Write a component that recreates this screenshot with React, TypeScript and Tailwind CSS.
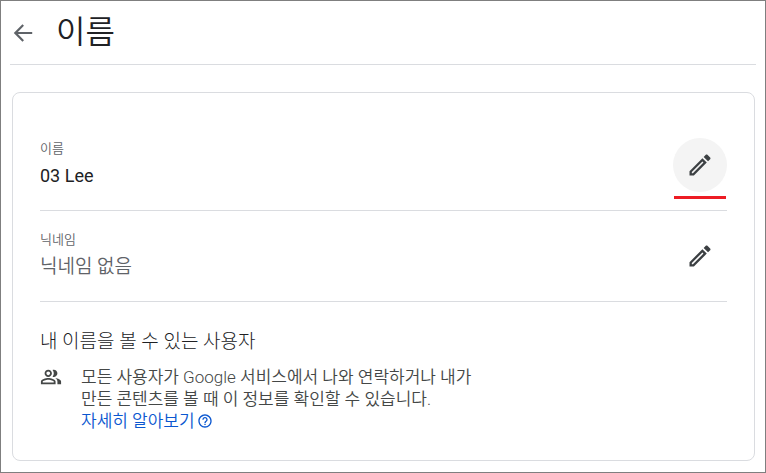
import React from "react";

function PencilIcon() {
  return (
    <svg viewBox="0 0 24 24" className="size-7 fill-[#3c4043]" aria-hidden="true">
      <path d="M14.06 9.02l.92.92L5.92 19H5v-.92l9.06-9.06M17.66 3c-.25 0-.51.1-.7.29l-1.83 1.83 3.75 3.75 1.83-1.83c.39-.39.39-1.02 0-1.41l-2.34-2.34c-.2-.2-.45-.29-.71-.29zm-3.6 3.19L3 17.25V21h3.75L17.81 9.94l-3.75-3.75z" />
    </svg>
  );
}

function BackIcon() {
  return (
    <svg viewBox="0 0 24 24" className="size-[26px] fill-[#5f6368]" aria-hidden="true">
      <path d="M20.5 11H7.3l5.59-5.59L11.5 4l-8 8 8 8 1.41-1.41L7.3 13h13.2v-2z" />
    </svg>
  );
}

function PeopleIcon() {
  return (
    <svg viewBox="0 0 24 24" className="size-[22px] shrink-0 fill-[#444746]" aria-hidden="true">
      <path d="M16.67 13.13C18.04 14.06 19 15.32 19 17v3h4v-3c0-2.18-3.57-3.47-6.33-3.87z" />
      <path d="M15 12c2.21 0 4-1.79 4-4s-1.79-4-4-4c-.47 0-.91.1-1.33.24C14.5 5.27 15 6.58 15 8s-.5 2.73-1.33 3.76c.42.14.86.24 1.33.24z" />
      <path d="M9 12c2.21 0 4-1.79 4-4s-1.79-4-4-4-4 1.79-4 4 1.79 4 4 4zm0-6c1.1 0 2 .9 2 2s-.9 2-2 2-2-.9-2-2 .9-2 2-2zm0 7c-2.67 0-8 1.34-8 4v3h16v-3c0-2.66-5.33-4-8-4zm6 5H3v-.99C3.2 16.29 6.3 15 9 15s5.8 1.29 6 2v1z" />
    </svg>
  );
}

function HelpIcon() {
  return (
    <svg viewBox="0 0 24 24" className="size-4 fill-[#0b57d0]" aria-hidden="true">
      <path d="M11 18h2v-2h-2v2zm1-16C6.48 2 2 6.48 2 12s4.48 10 10 10 10-4.48 10-10S17.52 2 12 2zm0 18c-4.41 0-8-3.59-8-8s3.59-8 8-8 8 3.59 8 8-3.59 8-8 8zm0-14c-2.21 0-4 1.79-4 4h2c0-1.1.9-2 2-2s2 .9 2 2c0 2-3 1.75-3 5h2c0-2.25 3-2.5 3-5 0-2.21-1.79-4-4-4z" />
    </svg>
  );
}

type FieldProps = {
  label: string;
  value: string;
  muted?: boolean;
  active?: boolean;
};

function Field({ label, value, muted, active }: FieldProps) {
  return (
    <div className="flex h-[91px] items-center justify-between border-b border-[#dadce0]">
      <dl className="pt-0.5">
        <dt className="text-[13px] leading-5 font-[350] text-[#5f6368]">{label}</dt>
        <dd
          className={
            muted
              ? "text-[19px] leading-[34px] font-[350] text-[#5f6368]"
              : "text-lg leading-[34px] text-[#202124]"
          }
        >
          {value}
        </dd>
      </dl>
      <div className="relative">
        <button
          type="button"
          aria-label={label + " 수정"}
          className={
            active
              ? "flex size-[54px] items-center justify-center rounded-full bg-[#f4f4f4]"
              : "flex size-[54px] items-center justify-center rounded-full"
          }
        >
          <PencilIcon />
        </button>
        {active && <span className="absolute inset-x-px top-full mt-1 h-[3px] bg-[#ed1c24]" />}
      </div>
    </div>
  );
}

export default function App() {
  return (
    <div className="min-h-screen border border-[#7f7f7f] bg-white px-[9px] pb-2 font-['Roboto','Noto_Sans_CJK_KR',sans-serif] font-normal">
      <header className="flex h-16 items-center gap-5 border-b border-[#dadce0]">
        <button type="button" aria-label="뒤로">
          <BackIcon />
        </button>
        <h1 className="pb-2 font-['Noto_Sans_CJK_KR',sans-serif] text-[32px] leading-10 font-[350] text-[#202124]">이름</h1>
      </header>
      <main className="mt-[27px] mr-px ml-0.5 rounded-lg border border-[#dadce0] px-[27px] pt-[27px] pb-7">
        <Field label="이름" value="03 Lee" active />
        <Field label="닉네임" value="닉네임 없음" muted />
        <section className="pt-[26px]">
          <h2 className="text-[19px] leading-7 font-light text-[#202124]">내 이름을 볼 수 있는 사용자</h2>
          <div className="mt-2.5 flex gap-[19px]">
            <PeopleIcon />
            <p className="w-[400px] text-[17px] leading-[22px] font-[350] text-[#444746]">
              모든 사용자가 Google 서비스에서 나와 연락하거나 내가 만든 콘텐츠를 볼 때 이 정보를 확인할 수 있습니다.
              <a href="#learn-more" className="flex items-center gap-0.5 text-[#0b57d0]">
                자세히 알아보기
                <HelpIcon />
              </a>
            </p>
          </div>
        </section>
      </main>
    </div>
  );
}
